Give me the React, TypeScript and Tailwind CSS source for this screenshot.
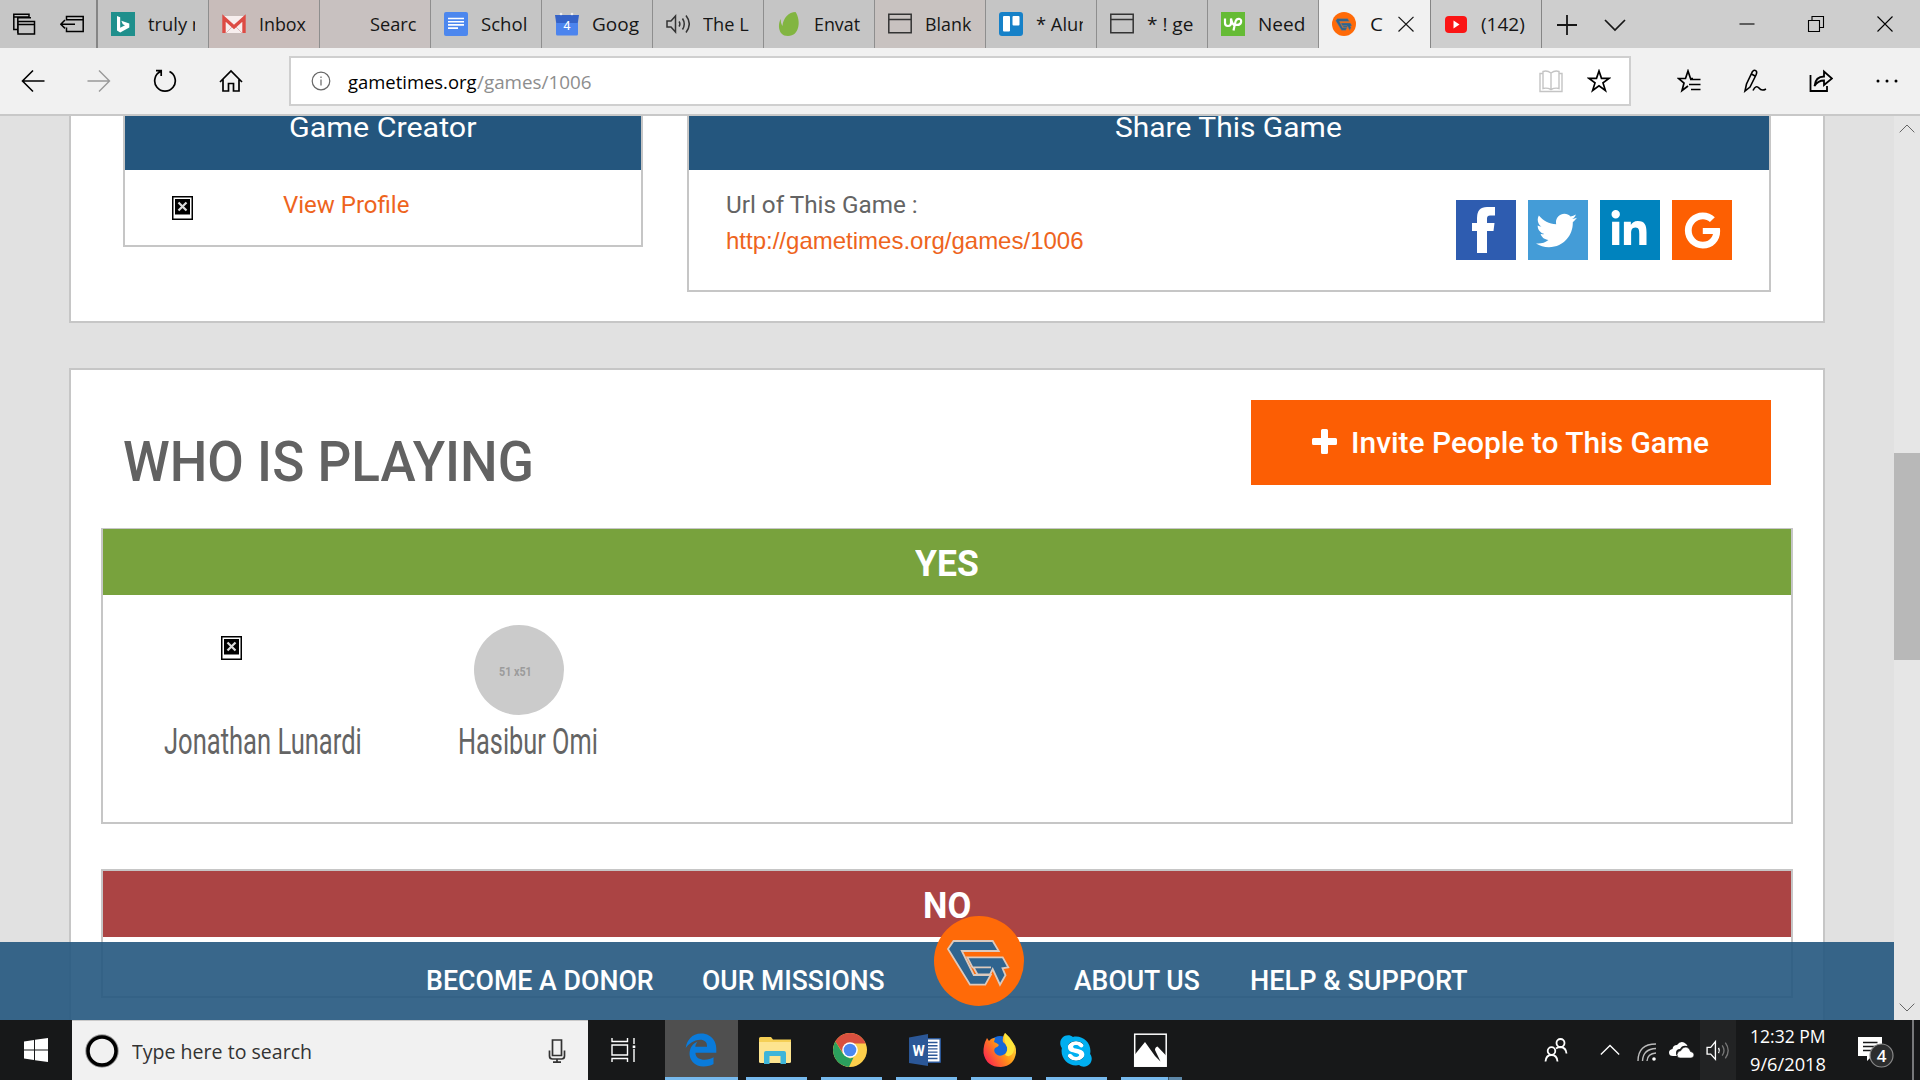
import { useLayoutEffect, useRef, useState } from "react";
import type { ReactNode } from "react";
import { FaTwitter, FaLinkedinIn, FaGoogle, FaEdgeLegacy, FaSkype } from "react-icons/fa6";

const SANS = "font-['Open_Sans','Noto_Sans',sans-serif]";
const DIN = "font-[Roboto,sans-serif]";

/** Single line of text condensed or stretched to an exact width. */
function Fit({ w, className = "", children }: { w: number; className?: string; children: ReactNode }) {
  const ref = useRef<HTMLSpanElement>(null);
  const [scale, setScale] = useState(1);
  useLayoutEffect(() => {
    if (ref.current) setScale(w / ref.current.offsetWidth);
  }, [w]);
  return (
    <span className={`block shrink-0 whitespace-nowrap ${className}`} style={{ width: w }}>
      <span ref={ref} className="inline-block origin-left whitespace-pre" style={{ transform: `scaleX(${scale})` }}>
        {children}
      </span>
    </span>
  );
}

function Line({ s = 24, w = 1.5, className = "", children }: { s?: number; w?: number; className?: string; children: ReactNode }) {
  return (
    <svg width={s} height={s} viewBox="0 0 24 24" fill="none" stroke="currentColor" strokeWidth={w} className={`shrink-0 ${className}`}>
      {children}
    </svg>
  );
}

const GLogo = ({ s, ring }: { s: number; ring: string }) => (
  <svg width={s} height={s} viewBox="0 0 90 90" className="block shrink-0">
    <circle cx="45" cy="45" r="45" fill="#ff6a08" />
    <g fill="#2f648f" stroke={ring} strokeWidth="1.8" strokeLinejoin="miter">
      <path d="M19.5 25H58.7L64.7 35H27.8L39.8 59H56.7L51.3 68.7H36L14 33Z" />
      <path d="M33.3 41.3H68.7L74.3 51.3L68.5 52.3L71.5 59.3L66 68.7L58.7 53L56 58.5H43.5L39.5 51.3H57L38.5 51.3Z" />
    </g>
  </svg>
);

const WindowIcon = () => (
  <Line className="text-[#333]">
    <path d="M.8 2.2H23.2V20.8H.8ZM.8 7.5H23.2" />
  </Line>
);

const tabs: { label: string; w: number; icon: ReactNode; tint?: string }[] = [
  {
    label: "truly n", w: 55,
    icon: (
      <svg width="24" height="24" viewBox="0 0 24 24">
        <rect width="24" height="24" fill="#1f8f8c" />
        <path d="M6 4l3.2 1.2v10.6l4.8-2.6-2.2-1-1.5-3.5 8 2.8v4L9.2 20.500 6 18.500Z" fill="#fff" />
      </svg>
    ),
  },
  {
    label: "Inbox", w: 47, tint: "bg-[#c8bcba]",
    icon: (
      <svg width="24" height="24" viewBox="0 0 24 24">
        <rect x="1" y="4" width="22" height="17" rx="1.500" fill="#f7eeee" />
        <path d="M4 21l8-8 8 8" stroke="#dbb" fill="none" />
        <path d="M2 21V6l10 9L22 6v15" stroke="#dd4b44" strokeWidth="3.400" fill="none" />
      </svg>
    ),
  },
  { label: "Searc", w: 47, icon: null, tint: "bg-[#c8c1c0]" },
  {
    label: "Schol", w: 46,
    icon: (
      <svg width="24" height="24" viewBox="0 0 24 24">
        <rect width="24" height="24" rx="2" fill="#4c87ee" />
        <path d="M4 6.500H20M4 9.700H20M4 12.900H20M4 16.100H14" stroke="#fff" strokeWidth="1.600" />
      </svg>
    ),
  },
  {
    label: "Goog", w: 47,
    icon: (
      <svg width="24" height="24" viewBox="0 0 24 24">
        <path d="M0 3H24L22.500 13H1.500Z" fill="#3563c8" />
        <path d="M1 11H23V22a1.500 1.500 0 0 1-1.500 1.500H2.500A1.500 1.500 0 0 1 1 22Z" fill="#4c84ee" />
        <circle cx="6" cy="2" r="1.300" fill="#eee" />
        <circle cx="17" cy="2" r="1.300" fill="#eee" />
        <text x="12" y="18" fontSize="13" fill="#fff" textAnchor="middle" fontFamily="Roboto">4</text>
      </svg>
    ),
  },
  {
    label: "The L", w: 46,
    icon: (
      <Line className="text-[#333]">
        <path d="M1 9V15H5L9.500 20V4L5 9ZM13 9.500Q14.800 12 13 14.500M16.500 6.500Q20 12 16.500 17.500M20 3.500Q26.500 12 20 20.500" />
      </Line>
    ),
  },
  {
    label: "Envat", w: 46,
    icon: (
      <svg width="24" height="24" viewBox="0 0 24 24">
        <path d="M18.500 0C12 0 6 6 5.500 14C4 12 3.500 9 4 7C1 10 0 24 11 24C23 24 24 8 18.500 0Z" fill="#82b541" />
      </svg>
    ),
  },
  { label: "Blank", w: 46, icon: <WindowIcon />, tint: "bg-[#c8c2c0]" },
  {
    label: "* Alun", w: 54,
    icon: (
      <svg width="24" height="24" viewBox="0 0 24 24">
        <rect width="24" height="24" rx="3" fill="#1681c8" />
        <rect x="4" y="4" width="7" height="15.500" rx="1" fill="#fff" />
        <rect x="13.500" y="4" width="7" height="9.500" rx="1" fill="#fff" />
      </svg>
    ),
  },
  { label: "* ! ge", w: 46, icon: <WindowIcon /> },
  {
    label: "Need", w: 47,
    icon: (
      <svg width="24" height="24" viewBox="0 0 24 24">
        <rect width="24" height="24" fill="#65bb35" />
        <path d="M4 6.500V11a3 3 0 0 0 6 0V6.500Q11 12 14 14M12.500 18.500L14.500 9.500Q15.500 6.500 18 6.800Q20.800 7.500 20 10.500Q18.500 14 14.200 12.500" fill="none" stroke="#fff" strokeWidth="2.200" />
      </svg>
    ),
  },
];

const CARD = "border-2 border-[#c6c6c6] bg-white";

function BrokenImage({ className = "" }: { className?: string }) {
  return (
    <svg width="21" height="24" viewBox="0 0 21 24" className={className}>
      <rect x=".75" y=".75" width="19.500" height="22.500" fill="#fff" stroke="#000" strokeWidth="1.500" />
      <rect x="3" y="3" width="15" height="15.500" fill="#000" />
      <path d="M6.500 6.500L14.500 14.500M14.500 6.500L6.500 14.500" stroke="#ddd" strokeWidth="2.200" />
    </svg>
  );
}

function TopChrome() {
  return (
    <header className={SANS}>
      <div className="flex h-12 bg-[#cecece] text-[19px] leading-[48px] text-[#161616]">
        <div className="flex w-[98px] items-center border-r-2 border-[#858585] bg-[#c6c6c6] pl-3 text-black">
          <Line>
            <path d="M6 17.500H1.800V2.200H17V5.500M1.800 5H17M5.800 21V5.800H19M6 9.500H22.500V22H6ZM6 12.500H22.500" />
          </Line>
          <Line className="ml-6">
            <path d="M6.500 8.500V4.500H23.200V19.500H6.500V15.500M6.500 7.800H23.200M.8 12.200H15M5 8L.8 12.200L5 16.400" />
          </Line>
        </div>
        {tabs.map((t) => (
          <div key={t.label} className={`flex w-[111px] items-center border-r border-[#8e8e8e] pl-[13px] ${t.tint ?? "bg-[#c5c5c5]"}`}>
            <span className="flex w-6 shrink-0">{t.icon}</span>
            <span className="ml-[13px] w-[47px] overflow-hidden">
              <Fit w={t.w}>{t.label}</Fit>
            </span>
          </div>
        ))}
        <div className="flex w-[111px] items-center bg-[#f1f1f1] pl-[13px]">
          <GLogo s={24} ring="#8a7a70" />
          <Fit w={13} className="ml-[14px]">C</Fit>
          <Line s={18} w={1.6} className="ml-[14px]">
            <path d="M2 2.500L22 22M22 2.500L2 22" />
          </Line>
        </div>
        <div className="flex w-[112px] items-center border-x border-[#858585] pl-[14px]">
          <svg width="22" height="17" viewBox="0 0 22 17">
            <rect width="22" height="17" rx="4" fill="#fb1515" />
            <path d="M8.500 4.500L14.500 8.500L8.500 12.500Z" fill="#fff" />
          </svg>
          <Fit w={44} className="ml-[14px]">(142)</Fit>
        </div>
        <Line className="ml-[13px] mt-[13px]" w={1.8}>
          <path d="M12 2V22M2 12H22" />
        </Line>
        <Line className="ml-6 mt-[13px]" w={1.7}>
          <path d="M2 7L12 17L22 7" />
        </Line>
        <div className="ml-[108px] flex items-center gap-[45px] text-black">
          <Line w={1.1}><path d="M4.500 12H19.500" /></Line>
          <Line w={1.1}><path d="M4.500 8.500H15.500V19.500H4.500ZM8 8.500V4.500H19.500V15.500H15.500" /></Line>
          <Line w={1.1}><path d="M4.500 4.500L19.500 19.500M19.500 4.500L4.500 19.500" /></Line>
        </div>
      </div>

      <div className="flex h-[68px] border-b-2 border-[#c8c8c8] bg-[#f1f1f1] pt-2 text-black">
        <div className="flex h-[50px] items-center gap-[42px] pl-[21px]">
          <Line w={1.6}><path d="M23.500 12H1.500M12 1.500L1.500 12L12 22.500" /></Line>
          <Line w={1.400} className="text-[#999]"><path d="M.5 12H22.500M12 1.500L22.500 12L12 22.500" /></Line>
          <Line w={1.7}><path d="M16.500 2.600A10.300 10.300 0 1 1 7.500 2.600M3 1.700H8.200V7" /></Line>
          <Line w={1.700}><path d="M1 13L12 2L23 13M4 10.500V22H9.500V14.500H14.500V22H20V10.500" /></Line>
        </div>
        <div className="ml-[46px] flex h-[50px] w-[1342px] items-center border-2 border-[#cfcfcf] bg-white pl-5 text-[19px] leading-[48px]">
          <svg width="20" height="20" viewBox="0 0 20 20" fill="none" stroke="#666" strokeWidth="1.200">
            <circle cx="10" cy="10" r="8.800" />
            <path d="M10 8.500V14.500M10 5.500V7" />
          </svg>
          <Fit w={129} className="ml-[17px] mt-[2px]">gametimes.org</Fit>
          <Fit w={115} className="mt-[2px] text-[#8d8d8d]">/games/1006</Fit>
          <Line className="ml-auto text-[#c4c4c4]" w={1.4}>
            <path d="M12 4Q8 1 4 2.500V19.500Q8 18.500 12 20.500Q16 18.500 20 19.500V2.500Q16 1 12 4V20M4 4.500H1V22.500H23V4.500H20" />
          </Line>
          <Line className="ml-6 mr-[18px]" w={1.7}>
            <path d="M12 2L14.500 9.300H22.300L16 13.900L18.400 21.500L12 16.900L5.600 21.500L8 13.900L1.700 9.300H9.500Z" />
          </Line>
        </div>
        <div className="flex h-[50px] items-center gap-[42px] pl-[46px]">
          <Line w={1.7}>
            <path d="M16 9.500H13.500L11 2L8.500 9.500H1.500L7 14L5 21.500L11 17M13 10.500H23.500M12 15.500H23.500M14 20.500H23.500" />
          </Line>
          <Line w={1.6}>
            <path d="M2 22L3.500 15L9.500 2.500Q12 0 13.500 2.500Q14 4 13 6L7 18ZM8.500 5L12 7M10 21.500Q13 15.500 16 19Q18.500 22.500 23 20" />
          </Line>
          <Line w={1.800}>
            <path d="M1.500 6V22H18V17M5.500 17Q6.500 7.500 15 7.500V2.500L23 9.500L15 16V11.500Q9 11.500 5.500 17Z" />
          </Line>
          <svg width="24" height="24" viewBox="0 0 24 24"><circle cx="3" cy="12" r="1.500" /><circle cx="12" cy="12" r="1.500" /><circle cx="21" cy="12" r="1.500" /></svg>
        </div>
      </div>
    </header>
  );
}

function SocialLinks() {
  return (
    <div className="ml-auto mr-[37px] mt-[30px] flex h-[60px] gap-3 text-white">
      <span className="flex size-[60px] bg-[#2e5cb0] pl-4 pt-[7px]">
        <svg width="23" height="46" viewBox="0 0 23 46" fill="currentColor">
          <path d="M5 46V24H0V16H5V11Q5 0 15 0H23V8.500H18Q15 8.500 15 11.500V16H22.500L21.500 24H15V46Z" />
        </svg>
      </span>
      <span className="flex size-[60px] items-center justify-center bg-[#449cd7] pr-1"><FaTwitter size={41} /></span>
      <span className="flex size-[60px] items-center justify-center bg-[#0083be] pr-[2px]"><FaLinkedinIn size={40} /></span>
      <span className="flex size-[60px] items-center justify-center bg-[#fd5f02]"><FaGoogle size={37} /></span>
    </div>
  );
}

function Page() {
  return (
    <main className={`relative h-[904px] w-[1894px] overflow-hidden bg-[#e1e1e1] text-[#646464] ${DIN}`}>
      <section className={`ml-[69px] flex h-[207px] w-[1756px] items-start border-t-0 pl-[52px] ${CARD}`}>
        <div className={`h-[131px] w-[520px] border-t-0 ${CARD}`}>
          <div className="h-[54px] bg-[#24567e] pl-[164px] text-[28px] leading-[23px] text-white">
            <Fit w={188}>Game Creator</Fit>
          </div>
          <div className="flex">
            <BrokenImage className="ml-[47px] mt-[26px]" />
            <Fit w={126} className="ml-[90px] mt-5 text-[24px] leading-[31px] text-[#ee641d]">View Profile</Fit>
          </div>
        </div>
        <div className={`ml-11 h-[176px] w-[1084px] border-t-0 ${CARD}`}>
          <div className="h-[54px] bg-[#24567e] pl-[426px] text-[28px] leading-[23px] text-white">
            <Fit w={227}>Share This Game</Fit>
          </div>
          <div className="flex">
            <div className="ml-[37px] mt-5 text-[24px] leading-[30px]">
              <Fit w={192}>Url of This Game :</Fit>
              <Fit w={358} className="mt-[6px] font-['Liberation_Sans',sans-serif] text-[#ee641d]">http://gametimes.org/games/1006</Fit>
            </div>
            <SocialLinks />
          </div>
        </div>
      </section>

      <section className={`ml-[69px] mt-[45px] h-[700px] w-[1756px] ${CARD}`}>
        <div className="flex h-[158px] items-start justify-between px-[52px]">
          <h2 className="mt-[62px] text-[55px] font-medium leading-[60px] text-[#626262]">
            <Fit w={411}>WHO IS PLAYING</Fit>
          </h2>
          <div className="mt-[30px] flex h-[85px] w-[520px] items-center bg-[#fc5e04] pl-[61px] text-[30px] font-medium text-white">
            <svg width="25" height="25" viewBox="0 0 25 25" fill="currentColor" className="-mt-[3px]">
              <path d="M9 1.500Q9 0 10.500 0H14.500Q16 0 16 1.500V9H23.500Q25 9 25 10.500V14.500Q25 16 23.500 16H16V23.500Q16 25 14.500 25H10.500Q9 25 9 23.500V16H1.500Q0 16 0 14.500V10.500Q0 9 1.500 9H9Z" />
            </svg>
            <Fit w={358} className="ml-[14px] leading-[84px]">Invite People to This Game</Fit>
          </div>
        </div>
        <div className={`ml-[30px] h-[296px] w-[1692px] border-t ${CARD}`}>
          <div className="flex h-[66px] justify-center bg-[#78a23d] text-[36px] font-bold leading-[71px] text-white">
            <Fit w={64}>YES</Fit>
          </div>
          <div className="flex pt-[30px] text-[36px] leading-10">
            <div className="ml-[61px]">
              <div className="h-[90px] pl-[57px] pt-[11px]"><BrokenImage /></div>
              <Fit w={198} className="mt-[7px]">Jonathan Lunardi</Fit>
            </div>
            <div className="ml-[96px]">
              <div className="ml-[16px] flex h-[90px] w-[90px] items-center rounded-full bg-[#cbcbcb] pl-[25px] pt-1 text-[13px] font-bold leading-4 text-[#9b9b9b]">
                <Fit w={33}>51 x51</Fit>
              </div>
              <Fit w={140} className="mt-[7px]">Hasibur Omi</Fit>
            </div>
          </div>
        </div>
        <div className={`ml-[30px] mt-[45px] h-[129px] w-[1692px] ${CARD}`}>
          <div className="flex h-[66px] justify-center bg-[#ab4444] text-[36px] font-bold leading-[70px] text-white">
            <Fit w={48}>NO</Fit>
          </div>
        </div>
      </section>

      <nav className="absolute bottom-0 left-0 flex h-[78px] w-full bg-[#24567e]/90 pl-[426px] text-[27px] font-medium leading-[78px] text-white">
        <Fit w={228}>BECOME A DONOR</Fit>
        <Fit w={183} className="ml-[48px]">OUR MISSIONS</Fit>
        <div className="-mt-[26px] ml-[49px]"><GLogo s={90} ring="#dcc9bd" /></div>
        <Fit w={126} className="ml-[50px]">ABOUT US</Fit>
        <Fit w={218} className="ml-[50px]">HELP &amp; SUPPORT</Fit>
      </nav>
    </main>
  );
}

function Scrollbar() {
  return (
    <aside className="flex w-[26px] flex-col items-center bg-[#e6e6e6] text-[#666]">
      <Line s={16} className="mt-[5px]"><path d="M1 17L12 6L23 17" /></Line>
      <div className="mt-[316px] h-[207px] w-full bg-[#b8b8b8]" />
      <Line s={16} className="mb-[5px] mt-auto"><path d="M1 7L12 18L23 7" /></Line>
    </aside>
  );
}

const apps: { name: string; icon: ReactNode }[] = [
  {
    name: "explorer",
    icon: (
      <svg width="34" height="34" viewBox="0 0 34 34">
        <path d="M1 5.500Q1 4 2.500 4H13L15 6.500H33V29H1Z" fill="#f5cf55" />
        <path d="M1 9H33V28.500Q33 30 31.500 30H2.500Q1 30 1 28.500Z" fill="#fde48f" />
        <path d="M6 31V20Q6 18 8 18H26Q28 18 28 20V31H22.500V23H11.500V31Z" fill="#3eb5d9" />
      </svg>
    ),
  },
  {
    name: "chrome",
    icon: (
      <svg width="34" height="34" viewBox="0 0 34 34">
        <circle cx="17" cy="17" r="17" fill="#fdcf4b" />
        <path d="M2.300 8.500A17 17 0 0 1 31.700 8.500L32.500 10.500H17L10 20Z" fill="#d9503f" />
        <path d="M2.300 8.500L10.200 21L17 25.500L20.500 24.500L16 34A17 17 0 0 1 2.300 8.500Z" fill="#2ba05d" />
        <circle cx="17" cy="17" r="7.800" fill="#fff" />
        <circle cx="17" cy="17" r="6.300" fill="#4c88f0" />
      </svg>
    ),
  },
  {
    name: "word",
    icon: (
      <svg width="34" height="34" viewBox="0 0 34 34">
        <rect x="16" y="5" width="17" height="25" rx="1" fill="#2b5797" />
        <rect x="16" y="6.500" width="15.500" height="22" fill="#fff" />
        <path d="M18 9.500H29.500M18 12.700H29.500M18 15.900H29.500M18 19.100H29.500M18 22.300H29.500M18 25.500H29.500" stroke="#2b5797" strokeWidth="1.400" />
        <path d="M1 4.500L20 1V33L1 30Z" fill="#2b5797" />
        <text x="10.500" y="22.500" fontSize="14" fontWeight="700" fill="#fff" textAnchor="middle" fontFamily="Roboto">W</text>
      </svg>
    ),
  },
  {
    name: "firefox",
    icon: (
      <svg width="34" height="34" viewBox="0 0 34 34">
        <defs>
          <linearGradient id="fox" x1="1" y1=".1" x2="0" y2=".8">
            <stop offset="0" stopColor="#fff24a" />
            <stop offset=".5" stopColor="#ff9416" />
            <stop offset="1" stopColor="#fb1f52" />
          </linearGradient>
        </defs>
        <circle cx="17" cy="15" r="12" fill="#1668d8" />
        <path d="M22 0Q25 3 26.500 6Q34 12 33 20Q31 33 18 34Q3 34 .5 20Q0 12 4 5L6 8Q8 5 12 5L11 9Q14 10 16 12Q15 14 12 15Q10 18 13 21Q16 24 20 22Q25 20 24 14Q23 11 20 9Q19 4 22 0Z" fill="url(#fox)" />
        <path d="M22 0Q27 4 29 8Q33 14 30 20Q27 25 22 22Q25 18 24 14Q20 6 22 0Z" fill="#ffe63b" />
      </svg>
    ),
  },
  {
    name: "skype",
    icon: (
      <span className="grid size-[34px] place-items-center">
        <span className="col-start-1 row-start-1 size-5 rounded-full bg-white" />
        <FaSkype size={36} className="col-start-1 row-start-1 text-[#00aff0]" />
      </span>
    ),
  },
  {
    name: "photos",
    icon: (
      <svg width="34" height="34" viewBox="0 0 34 34">
        <rect x="1.700" y="1.200" width="31.500" height="32" fill="none" stroke="#fff" strokeWidth="1.500" />
        <path d="M1.500 22L12 9L22 23L27.500 28.500L22 17Q22 14 24.500 13.500L33 22.500V33.500H1.500Z" fill="#fff" />
      </svg>
    ),
  },
];

function Taskbar() {
  return (
    <footer className={`flex h-[60px] bg-[#171819] text-white ${SANS}`}>
      <div className="flex w-[72px] items-center pl-6">
        <svg width="24" height="24" viewBox="0 0 24 24" fill="#fff">
          <path d="M0 3.400L10 2V11.500H0ZM11 1.800L24 0V11.500H11ZM0 12.500H10V22L0 20.600ZM11 12.500H24V24L11 22.200Z" />
        </svg>
      </div>
      <div className="flex w-[516px] items-center border-t border-[#c9c9c9] bg-[#f1f1f1] pl-[13px] text-[#333]">
        <svg width="34" height="34" viewBox="0 0 34 34" fill="none">
          <circle cx="17" cy="17" r="15" stroke="#999" strokeWidth="3.500" />
          <circle cx="17" cy="17" r="14" stroke="#000" strokeWidth="3.500" />
        </svg>
        <Fit w={180} className="ml-[13px] mt-[2px] text-[20px] leading-[58px]">Type here to search</Fit>
        <Line className="ml-auto mr-[19px]" w={1.7}>
          <path d="M7.500 1H16.500V16.500H7.500ZM4.500 11.500V17Q4.500 20 7.500 20H16.500Q19.500 20 19.500 17V11.500M12 20V23.500M8 23.200H16" />
        </Line>
      </div>
      <div className="flex w-[77px] items-center pl-[23px]">
        <svg width="27" height="24" viewBox="0 0 27 24" fill="none" stroke="#fff" strokeWidth="1.400">
          <path d="M1 0V3.500H16.500V0M1 7H16.500V17H1ZM1 24V20.500H16.500V24M23 0V6M23 11V24" />
          <rect x="21.700" y="7.500" width="2.600" height="2.600" fill="#fff" stroke="none" />
        </svg>
      </div>
      <div className="flex w-[73px] items-center justify-center border-b-[3px] border-[#76b9ed] bg-[#4f4f4f] pr-[2px] pt-[3px] text-[#0a7bdb]">
        <FaEdgeLegacy size={34} />
      </div>
      <div className="ml-2 flex gap-[14px]">
        {apps.map((a) => (
          <div key={a.name} className="flex w-[61px] flex-col items-center pt-[13px]">
            <div className="flex h-11 pr-[3px]">{a.icon}</div>
            <div className="flex h-[3px] w-full bg-[#76b9ed]">
              {a.name === "photos" && <span className="ml-auto h-full w-[14px] border-l border-[#3a5568] bg-[#5d87a8]" />}
            </div>
          </div>
        ))}
      </div>
      <div className="ml-auto flex items-center">
        <Line w={1.800}>
          <circle cx="16.500" cy="5" r="4" />
          <circle cx="7.500" cy="13" r="3.800" />
          <path d="M1.500 23.500Q2 17 7.500 17Q13 17 13.500 23.500M12 10.500Q14 9 16.500 9Q22 9.500 22.500 15.500" />
        </Line>
        <Line s={20} className="ml-8" w={1.600}><path d="M1 17.500L12 6.500L23 17.500" /></Line>
        <svg width="20" height="20" viewBox="0 0 20 20" fill="none" stroke="#bbb" strokeWidth="1.400" className="ml-[17px] mt-1">
          <path d="M1 19Q1 2 19 2M5.500 19Q6 7 19 6.500M10 19Q10.500 11.500 19 11" />
          <circle cx="17" cy="17" r="1.800" fill="#fff" stroke="none" />
        </svg>
        <svg width="25" height="16" viewBox="0 0 25 16" fill="#fff" className="ml-3">
          <path d="M4 14Q0 14 0 10.500Q0 7.500 3.500 7Q4 3 8 3Q11-1 15 .5Q18 2 18.500 4Q13 2.500 11 7Q7 7 7 11Q7 13 8 14Z" />
          <path d="M11 16Q8 16 8 12.500Q8.500 9 12 8.500Q13 5 17 5Q20.500 5.500 21.500 9.500Q25 10 25 13Q24.500 16 22 16Z" stroke="#171819" strokeWidth=".6" />
        </svg>
        <div className="ml-[6px] flex h-[60px] w-9 items-center bg-[#222324] pl-[5px]">
          <Line s={25} w={1.3}>
            <path d="M2 9V15.500H5.500L10 20.500V3.500L5.500 9Z" />
            <path d="M13 9.500Q14.500 12 13 14.500" />
            <path d="M16.500 7Q20 12 16.500 17M19.500 4.500Q25 12 19.500 19.500" stroke="#777" />
          </Line>
        </div>
        <div className="ml-[14px] text-[18px] leading-7">
          <Fit w={76}>12:32 PM</Fit>
          <Fit w={76}>9/6/2018</Fit>
        </div>
        <div className="ml-8 h-9 w-[37px]">
          <svg width="37" height="36" viewBox="0 0 37 36">
            <path d="M0 0H24V19H14L9 24V19H0Z" transform="translate(0 5)" fill="#fff" />
            <path d="M5 10.500H19.500M5 14.500H19.500M5 18.500H15" stroke="#171819" strokeWidth="1.300" />
            <circle cx="23.500" cy="23.500" r="11.500" fill="#2c2d2e" stroke="#888" strokeWidth="1.200" />
            <text x="23.500" y="30" fontSize="17" fontWeight="600" fill="#fff" textAnchor="middle" fontFamily="Open Sans">4</text>
          </svg>
        </div>
        <div className="ml-[17px] mr-[6px] h-[60px] w-[2px] bg-[#77787a]" />
      </div>
    </footer>
  );
}

export default function App() {
  return (
    <div className="h-[1080px] w-[1920px] overflow-hidden">
      <TopChrome />
      <div className="flex h-[904px]">
        <Page />
        <Scrollbar />
      </div>
      <Taskbar />
    </div>
  );
}
